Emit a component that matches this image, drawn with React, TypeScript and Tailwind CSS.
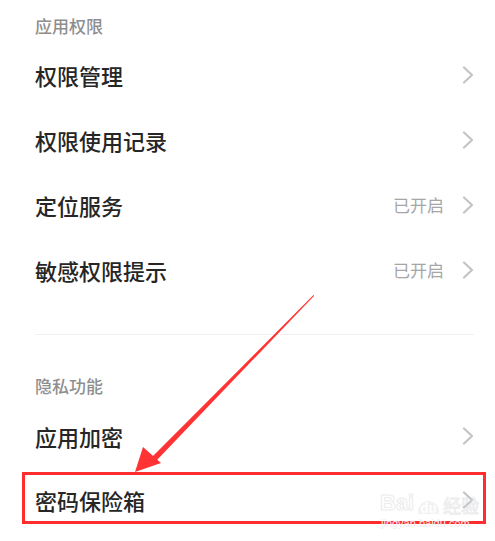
import React from "react";

const font = { fontFamily: '"Noto Sans CJK SC", "Noto Sans", sans-serif' };

function Chevron() {
	return (
		<svg width="12" height="18" viewBox="0 0 12 18" className="shrink-0">
			<path d="M2 1.5 L10 9 L2 16.5" fill="none" stroke="#c4c4c4" strokeWidth="2.2" strokeLinecap="round" strokeLinejoin="round" />
		</svg>
	);
}

function Row({ label, value, h = "h-[65px]" }: { label: string; value?: string; h?: string }) {
	return (
		<div className={`flex ${h} items-center justify-between pl-[35px] pr-[21px]`}>
			<span className="text-[22px] font-medium leading-none text-[#262626]">{label}</span>
			<div className="flex items-center gap-[18px]">
				{value && <span className="text-[17px] leading-none text-[#a6a6a6]">{value}</span>}
				<Chevron />
			</div>
		</div>
	);
}

export default function App() {
	return (
		<div className="relative h-[541px] w-[495px] overflow-hidden bg-white" style={font}>
			<div className="h-[42px] pl-[35px] pt-4 text-[17px] font-medium leading-5 text-[#8e8e8e]">应用权限</div>
			<Row label="权限管理" />
			<Row label="权限使用记录" />
			<Row label="定位服务" value="已开启" />
			<Row label="敏感权限提示" value="已开启" />
			<div className="ml-[35px] mr-[21px] mt-[32px] h-px bg-[#f0f0f0]" />
			<div className="h-[69px] pl-[35px] pt-[41px] text-[17px] font-medium leading-5 text-[#8e8e8e]">隐私功能</div>
			<Row label="应用加密" h="h-[64px]" />
			<Row label="密码保险箱" h="h-[64px]" />

			{/* annotation box */}
			<div className="absolute left-[22px] top-[472px] h-[52px] w-[464px] border-[3px] border-[#ff2d2d]" />

			{/* annotation arrow */}
			<svg className="pointer-events-none absolute left-0 top-0" width="495" height="541" viewBox="0 0 495 541">
				<polygon points="313.5,295 314.2,295.8 156,461 152,457" fill="#ff3333" />
				<polygon points="135,472 143,447 161,463" fill="#ff3333" />
			</svg>

			{/* watermark */}
			<div className="pointer-events-none absolute left-[380px] top-[492px] flex items-end gap-1 opacity-40">
				<span className="text-[22px] font-bold leading-none text-white" style={{ WebkitTextStroke: "1px #d0d0d0", fontFamily: '"Liberation Sans", sans-serif' }}>
					Bai
				</span>
				<span className="rounded-t-full bg-[#e0e0e0] px-0.5 text-[13px] font-bold leading-none text-white">du</span>
				<span className="text-[18px] leading-none text-white" style={{ WebkitTextStroke: "1px #d0d0d0" }}>
					经验
				</span>
			</div>
			<div className="pointer-events-none absolute left-[381px] top-[518px] text-[11px] leading-none text-[#eeeeee]" style={{ fontFamily: '"Liberation Sans", sans-serif' }}>
				jingyan.baidu.com
			</div>
		</div>
	);
}
